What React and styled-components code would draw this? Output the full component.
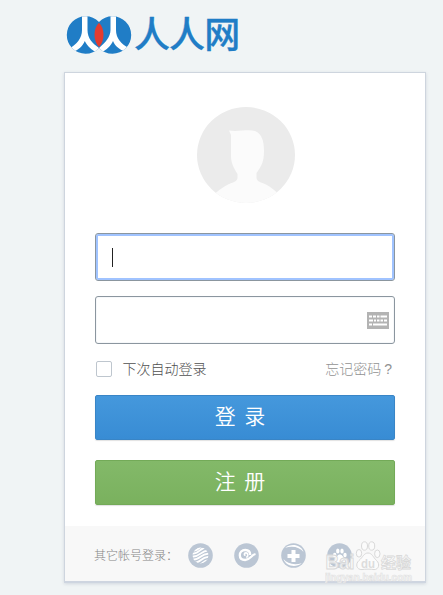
import styled, { createGlobalStyle } from 'styled-components';

const palette = {
  page: '#f0f4f5',
  logo: '#207dc6',
  red: '#e43c2f',
  line: '#8b969f',
  icon: '#bbc6d4',
};

const GlobalStyle = createGlobalStyle`
  * {
    box-sizing: border-box;
  }

  body {
    margin: 0;
    background: ${palette.page};
    font-family: 'Liberation Sans', 'Noto Sans CJK SC', sans-serif;
  }
`;

const Page = styled.div`
  width: 443px;
  height: 595px;
  padding-left: 64px;
  overflow: hidden;
`;

const Header = styled.header`
  height: 72px;
  display: flex;
  align-items: flex-start;
  padding: 16px 0 0 2px;
`;

const LogoMark = styled.svg`
  width: 66px;
  height: 38px;
  flex: none;
`;

const LogoText = styled.span`
  margin: -3px 0 0 2px;
  color: ${palette.logo};
  font-family: 'Noto Sans CJK SC', sans-serif;
  font-size: 36px;
  font-weight: 500;
  line-height: 38px;
  letter-spacing: -0.9px;
  -webkit-text-stroke: 0.3px ${palette.logo};
`;

const Card = styled.main`
  position: relative;
  width: 362px;
  height: 511px;
  display: flex;
  flex-direction: column;
  background: #fff;
  border: 1px solid #ced5de;
  border-bottom: 2px solid #ced5e0;
  box-shadow: 0 1px 3px rgba(100, 120, 150, 0.22);
`;

const Form = styled.form`
  flex: 1;
  display: flex;
  flex-direction: column;
  padding: 34px 30px 0;
`;

const Avatar = styled.svg`
  width: 98px;
  height: 98px;
  margin: 0 0 28px 102px;
  flex: none;
`;

const Field = styled.label`
  height: 48px;
  flex: none;
  display: flex;
  align-items: center;
  justify-content: space-between;
  margin-bottom: 15px;
  padding: 0 5px 0 16px;
  border: 1px solid ${palette.line};
  border-radius: 3px;
  box-shadow: inset 0 0 0
    ${({ $focused }) => ($focused ? '2px #a0c3ff' : '1px #f6f8fa')};
`;

const Caret = styled.span`
  width: 1px;
  height: 19px;
  background: #222;
`;

const Keyboard = styled.svg`
  width: 22px;
  height: 17px;
  margin-left: auto;
  margin-top: 1px;
`;

const Options = styled.div`
  height: 16px;
  display: flex;
  align-items: center;
  margin: 2px 0 18px 1px;
  color: #505050;
  font-size: 14px;
  font-weight: 300;
  line-height: 16px;
`;

const Checkbox = styled.span`
  width: 16px;
  height: 16px;
  margin-right: 10.5px;
  border: 1px solid #bec6ce;
  border-radius: 2px;
`;

const Forgot = styled.a`
  margin: -2px 3px 0 auto;
  color: #929292;
  font-family: 'Noto Sans CJK SC', sans-serif;

  b {
    margin-left: 3px;
    font-family: 'Liberation Sans', sans-serif;
  }
`;

const Button = styled.button`
  height: 45px;
  flex: none;
  margin: 0 0 20px;
  padding: 0 10px 6px 0;
  border: 1px solid ${({ $green }) => ($green ? '#73aa58' : '#3985c6')};
  border-radius: 2px;
  background: ${({ $green }) =>
    $green
      ? 'linear-gradient(#83b969, #7ab15e)'
      : 'linear-gradient(#4598dc, #388cd4)'};
  box-shadow: 0 1px 1px rgba(0, 0, 0, 0.12);
  color: #fff;
  font-family: 'Noto Sans CJK SC', sans-serif;
  font-size: 21px;
  font-weight: 350;
  line-height: 30px;
  word-spacing: 4px;
`;

const Footer = styled.footer`
  height: 55px;
  display: flex;
  align-items: center;
  padding: 4px 30px 0 29px;
  background: #f8f8f8;
`;

const FooterText = styled.span`
  width: 94px;
  margin-top: -2px;
  color: #858585;
  font-family: 'Noto Sans CJK SC', sans-serif;
  font-size: 12px;
  font-weight: 300;
  white-space: nowrap;
`;

const Accounts = styled.div`
  display: flex;
  gap: 21.4px;

  svg {
    width: 25px;
    height: 25px;
    display: block;
  }
`;

const Watermark = styled.svg`
  position: absolute;
  left: 260px;
  top: 465px;
  width: 95px;
  height: 48px;
`;

const Paw = () => (
  <>
    <ellipse cx="7.7" cy="12" rx="1.7" ry="2.3" />
    <ellipse cx="10.8" cy="8" rx="1.7" ry="2.5" />
    <ellipse cx="15" cy="8" rx="1.7" ry="2.5" />
    <ellipse cx="18" cy="12" rx="1.7" ry="2.3" />
    <path d="M12.8 11.5c2.5 0 3 2.5 4.7 4 2.2 2.1.7 4.5-1.5 4.3-1.4-.4-4.7-.4-6.1 0-2.5.2-3.8-2.4-1.8-4.2 1.7-1.6 2.3-4.1 4.7-4.1z" />
  </>
);

const Logo = () => (
  <LogoMark viewBox="0 0 66 38">
    <defs>
      <clipPath id="discs">
        <circle cx="19.5" cy="19" r="18.7" />
        <circle cx="46.5" cy="19" r="18.7" />
      </clipPath>
    </defs>
    <g clipPath="url(#discs)">
      <rect width="66" height="38" fill={palette.logo} />
      <path
        d="M16 0H21.5V14C21.5 22 26 27 33 32C39 27 44.5 21 44.5 14V0H50V14C50 22 55 28 63 32L59 36C53 33 49 30 47 25C45 30 40 34 35 37H31C26 34 21 30 18.8 25C17 30 12 34 7 36L3 33C11 28 16 22 16 14z"
        fill="#fff"
      />
    </g>
    <path
      d="M33 6.8C27 12.5 27 25 33 31C39 25 39 12.5 33 6.8z"
      fill={palette.red}
    />
  </LogoMark>
);

const App = () => (
  <Page>
    <GlobalStyle />
    <Header>
      <Logo />
      <LogoText>人人网</LogoText>
    </Header>

    <Card>
      <Form>
        <Avatar viewBox="0 0 98 98">
          <defs>
            <clipPath id="avatar">
              <ellipse cx="49" cy="48" rx="49" ry="48" />
            </clipPath>
          </defs>
          <g clipPath="url(#avatar)">
            <rect width="98" height="98" fill="#ebebeb" />
            <path
              d="M32 23.5C41 25 51 22 58 24C65 27 67 34 67 44C67 55 64 60 59.5 66V71C60 75 64 75 69 77.5C74 80 79 84 84 90V98H15V90C20 84 26 80 31 77.5C36 75 40 75 40.5 71V67C36 60 34 55 34 49V28z"
              fill="#fbfbfb"
            />
          </g>
        </Avatar>

        <Field $focused>
          <Caret />
        </Field>
        <Field>
          <Keyboard viewBox="0 0 22 17">
            <rect width="22" height="17" fill="#b3b3b3" />
            <path
              d="M2 4.5h3M6 4.5h3M10 4.5h2.5M13.5 4.5H20M2 8.5h4M7 8.5h2M10 8.5h2.5M13.5 8.5h2.5M17 8.5h3M2 12.5h3M6 12.5h14"
              stroke="#fff"
              strokeWidth="2.2"
            />
          </Keyboard>
        </Field>

        <Options>
          <Checkbox />
          <span>下次自动登录</span>
          <Forgot>
            忘记密码<b>?</b>
          </Forgot>
        </Options>

        <Button type="button">登 录</Button>
        <Button type="button" $green>
          注 册
        </Button>
      </Form>

      <Footer>
        <FooterText>其它帐号登录：</FooterText>
        <Accounts>
          <svg viewBox="0 0 25 25">
            <defs>
              <clipPath id="globe">
                <circle cx="12.5" cy="12.5" r="7.9" />
              </clipPath>
            </defs>
            <circle cx="12.5" cy="12.5" r="12.3" fill={palette.icon} />
            <g
              clipPath="url(#globe)"
              fill="none"
              stroke="#fff"
              strokeWidth="1.8"
            >
              <path d="M3 8Q9 7.5 12 4.5T20 1.5M3 10.9Q9 10.4 12 7.4T20 4.4M3 13.8Q9 13.6 12.5 10.6T21 7.3M3 16.8Q9 16.8 12.5 13.8T22 10.4M4 19.8Q10 19.8 13 17T22 13.5M7 22.5Q12 22.5 14.5 20T22 16.8" />
            </g>
          </svg>
          <svg viewBox="0 0 25 25">
            <circle cx="12.5" cy="12.5" r="12.3" fill={palette.icon} />
            <path
              d="M11.5 12.5C9.8 12.2 10 9.8 12 9.9C14.3 10.2 14.5 13.4 12.3 14.5"
              fill="none"
              stroke="#fff"
              strokeWidth="1.7"
            />
            <path
              d="M16.2 12C16.2 8.8 14.2 7 11.3 7C7.8 7 5.8 9.4 5.8 12.3C5.8 15.2 8 17 11.2 17C16 17 17.2 12 21.5 11"
              fill="none"
              stroke="#fff"
              strokeWidth="2.3"
            />
          </svg>
          <svg viewBox="0 0 25 25">
            <circle cx="12.5" cy="12.5" r="12.3" fill={palette.icon} />
            <g fill="#fff">
              <path d="M10.5 7h4v4h4v4h-4v4h-4v-4h-4v-4h4z" />
              <path d="M4.2 4.8C10 .2 20 1.4 22.5 9C19 4.4 12 2.4 4.2 4.8z" />
              <path d="M20.8 20.2C15 24.8 5 23.6 2.5 16C6 20.6 13 22.6 20.8 20.2z" />
            </g>
          </svg>
          <svg viewBox="0 0 25 25" fill="#fff">
            <circle cx="12.5" cy="12.5" r="12.3" fill={palette.icon} />
            <Paw />
          </svg>
        </Accounts>
      </Footer>

      <Watermark
        viewBox="0 0 95 48"
        fill="#fcfcfc"
        fillOpacity="0.75"
        stroke="#d9d9d9"
        strokeWidth="1"
        fontFamily="'Liberation Sans', 'Noto Sans CJK SC', sans-serif"
      >
        <text
          x="0.5"
          y="31"
          fontSize="20"
          fontWeight="700"
          textLength="29"
          lengthAdjust="spacingAndGlyphs"
        >
          Bai
        </text>
        <g>
          <ellipse cx="34" cy="15.3" rx="2.7" ry="3.8" />
          <ellipse cx="39.5" cy="8" rx="3" ry="4.2" />
          <ellipse cx="46.7" cy="8" rx="3" ry="4.2" />
          <ellipse cx="52.3" cy="15.8" rx="2.7" ry="3.8" />
          <path d="M43 15C47 15 48 19 51.5 22.5C55.5 26 53.5 31.8 49 31.6C46 31 40 31 37 31.6C31.5 31.8 30 26 34 22.5C38 19 39 15 43 15z" />
        </g>
        <text
          x="36"
          y="29.5"
          fontSize="12.5"
          fontWeight="700"
          fill="#d2d2d2"
          stroke="none"
          textLength="14"
          lengthAdjust="spacingAndGlyphs"
        >
          du
        </text>
        <text
          x="56"
          y="30"
          fontSize="15"
          fontWeight="700"
          strokeWidth="0.8"
          textLength="30"
        >
          经验
        </text>
        <text
          x="0"
          y="42.5"
          fontSize="10"
          fontWeight="700"
          textLength="87"
          lengthAdjust="spacingAndGlyphs"
          stroke="#e0e0e0"
          strokeWidth="0.6"
        >
          jingyan.baidu.com
        </text>
      </Watermark>
    </Card>
  </Page>
);

export default App;
